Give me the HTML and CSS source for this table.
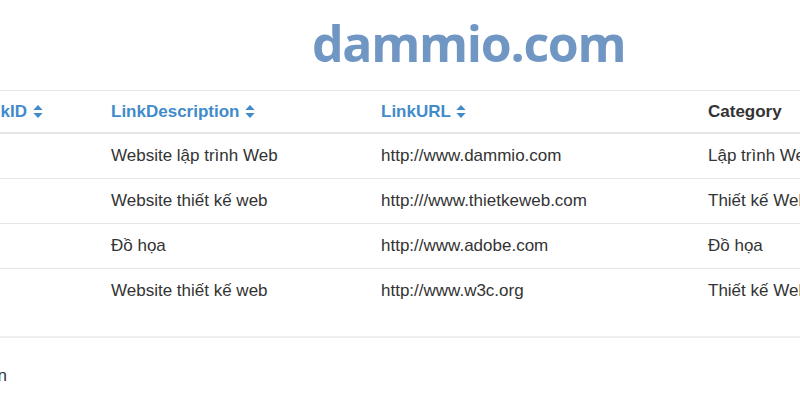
FILE: index.html
```html
<!DOCTYPE html>
<html lang="vi">
<head>
<meta charset="utf-8">
<link rel="stylesheet" href="styles.css">
</head>
<body>
<div class="page">
  <div class="logo">dammio.com</div>
  <table class="links">
    <colgroup>
      <col class="c1"><col class="c2"><col class="c3"><col class="c4">
    </colgroup>
    <thead>
      <tr>
        <th class="sortable">LinkID <svg class="sort" viewBox="0 0 10 14"><path d="M5 0 L10 5.5 H0 Z M0 8.5 H10 L5 14 Z"/></svg></th>
        <th class="sortable">LinkDescription <svg class="sort" viewBox="0 0 10 14"><path d="M5 0 L10 5.5 H0 Z M0 8.5 H10 L5 14 Z"/></svg></th>
        <th class="sortable">LinkURL <svg class="sort" viewBox="0 0 10 14"><path d="M5 0 L10 5.5 H0 Z M0 8.5 H10 L5 14 Z"/></svg></th>
        <th>Category</th>
      </tr>
    </thead>
    <tbody>
      <tr><td>1</td><td>Website lập trình Web</td><td>http://www.dammio.com</td><td>Lập trình Web</td></tr>
      <tr><td>2</td><td>Website thiết kế web</td><td>http:///www.thietkeweb.com</td><td>Thiết kế Web</td></tr>
      <tr><td>3</td><td>Đồ họa</td><td>http://www.adobe.com</td><td>Đồ họa</td></tr>
      <tr><td>4</td><td>Website thiết kế web</td><td>http://www.w3c.org</td><td>Thiết kế Web</td></tr>
    </tbody>
  </table>
  <hr class="rule">
  <div class="note"><span>Liên hệ: Admin</span></div>
</div>
</body>
</html>
```
FILE: styles.css
```css
html, body {
  margin: 0;
  padding: 0;
  background: #fff;
  overflow: hidden;
}
body {
  font-family: "Liberation Sans", Arial, sans-serif;
  font-size: 17px;
  color: #333;
}
.page {
  width: 800px;
  height: 400px;
  overflow: hidden;
}
.logo {
  font-family: "Open Sans", sans-serif;
  font-weight: 700;
  font-size: 50px;
  letter-spacing: -1.3px;
  color: #7096c3;
  line-height: 60px;
  padding: 13px 0 17px 312px;
}
.links {
  border-collapse: collapse;
  table-layout: fixed;
  width: 933px;
  margin-left: -33px;
}
.c1 { width: 136px; }
.c2 { width: 270px; }
.c3 { width: 327px; }
.c4 { width: 200px; }
.links th, .links td {
  text-align: left;
  padding: 10px 8px;
  line-height: 24px;
  white-space: nowrap;
  overflow: hidden;
}
.links th {
  font-weight: 700;
  color: #333;
  border-top: 1px solid #e6e6e6;
  border-bottom: 2px solid #e6e6e6;
  padding: 9px 8px 8px;
}
.links th.sortable {
  color: #428bca;
}
.links td {
  border-top: 1px solid #e6e6e6;
}
.links tbody tr:first-child td {
  border-top: none;
}
.sort {
  width: 10px;
  height: 13px;
  margin-left: 1px;
  vertical-align: -1px;
  fill: #428bca;
}
.rule {
  border: none;
  border-top: 2px solid #eeeeee;
  margin: 23px 0 0;
}
.note {
  display: flex;
  justify-content: flex-end;
  width: 7px;
  white-space: nowrap;
  margin-top: 26px;
  line-height: 24px;
}
```
